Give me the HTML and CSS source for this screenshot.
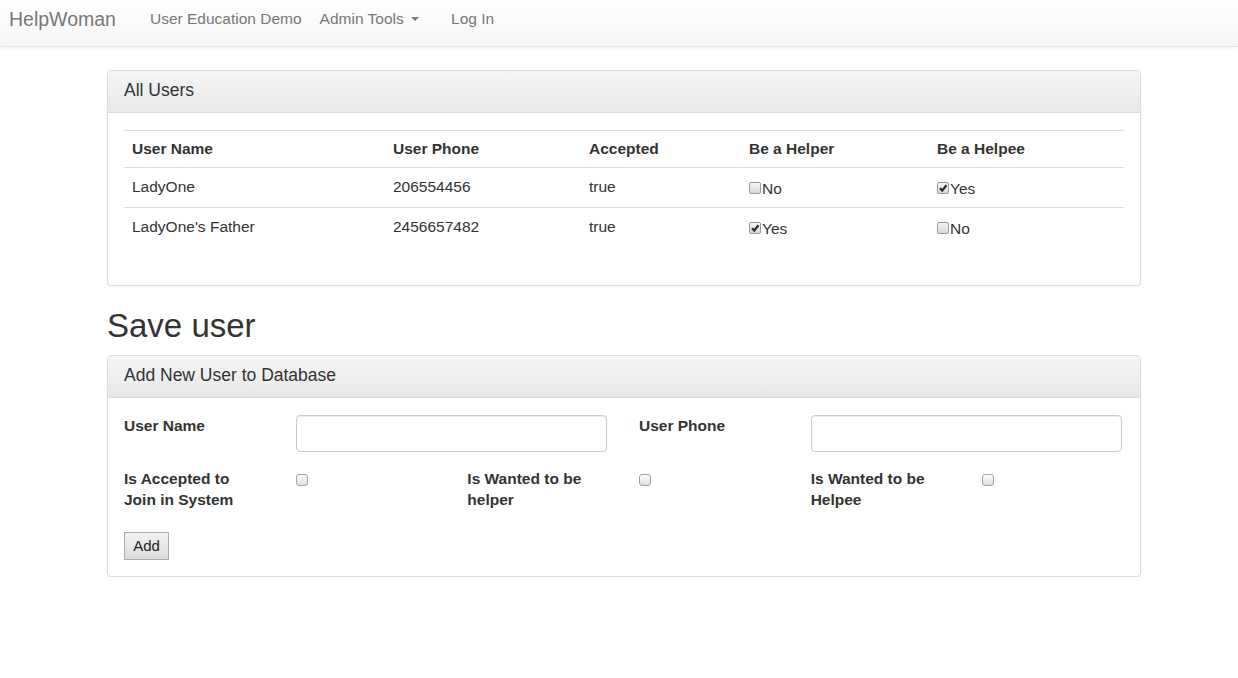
FILE: index.html
```html
<!DOCTYPE html>
<html>
<head>
<meta charset="utf-8">
<title>HelpWoman</title>
<link rel="stylesheet" href="styles.css">
</head>
<body>
<nav class="navbar">
  <a class="brand" href="#">HelpWoman</a>
  <ul class="nav">
    <li><a href="#">User Education Demo</a></li>
    <li><a href="#">Admin Tools <span class="caret"></span></a></li>
  </ul>
  <ul class="nav nav-right">
    <li><a href="#">Log In</a></li>
  </ul>
</nav>

<main class="container">
  <section class="panel">
    <div class="panel-heading">All Users</div>
    <div class="panel-body">
      <table class="table">
        <thead>
          <tr>
            <th class="c1">User Name</th>
            <th class="c2">User Phone</th>
            <th class="c3">Accepted</th>
            <th class="c4">Be a Helper</th>
            <th class="c5">Be a Helpee</th>
          </tr>
        </thead>
        <tbody>
          <tr>
            <td>LadyOne</td>
            <td>206554456</td>
            <td>true</td>
            <td><span class="tcb"><span class="box"></span>No</span></td>
            <td><span class="tcb"><span class="box"><svg viewBox="0 0 10 10" class="tick"><path d="M2 5.2 L4.2 7.6 L8.4 2.2" /></svg></span>Yes</span></td>
          </tr>
          <tr>
            <td>LadyOne's Father</td>
            <td>2456657482</td>
            <td>true</td>
            <td><span class="tcb"><span class="box"><svg viewBox="0 0 10 10" class="tick"><path d="M2 5.2 L4.2 7.6 L8.4 2.2" /></svg></span>Yes</span></td>
            <td><span class="tcb"><span class="box"></span>No</span></td>
          </tr>
        </tbody>
      </table>
    </div>
  </section>

  <h1 class="title">Save user</h1>

  <section class="panel">
    <div class="panel-heading">Add New User to Database</div>
    <div class="panel-body">
      <form class="form-grid">
        <label class="lbl">User Name</label>
        <div class="span2"><input class="input" type="text"></div>
        <label class="lbl">User Phone</label>
        <div class="span2"><input class="input" type="text"></div>

        <label class="lbl lbl2">Is Accepted to Join in System</label>
        <div><span class="fcb"></span></div>
        <label class="lbl lbl2">Is Wanted to be helper</label>
        <div><span class="fcb"></span></div>
        <label class="lbl lbl2">Is Wanted to be Helpee</label>
        <div><span class="fcb"></span></div>

        <div class="btn-row"><button type="button" class="btn">Add</button></div>
      </form>
    </div>
  </section>
</main>
</body>
</html>
```

FILE: styles.css
```css
* { box-sizing: border-box; }
html, body { margin: 0; padding: 0; }
body {
  font-family: "Liberation Sans", Arial, sans-serif;
  font-size: 15.5px;
  line-height: 20px;
  color: #333;
  background: #fff;
}
a { text-decoration: none; }

.navbar {
  display: flex;
  align-items: center;
  height: 47px;
  background: linear-gradient(to bottom, #ffffff 0%, #f6f6f6 100%);
  border-bottom: 1px solid #e4e4e4;
  box-shadow: 0 1px 4px rgba(0,0,0,0.06);
  padding-bottom: 9px;
}
.brand {
  color: #777;
  font-size: 19.5px;
  line-height: 20px;
  padding: 0 0 0 9px;
  margin-right: 34px;
}
.nav {
  list-style: none;
  margin: 0;
  padding: 0;
  display: flex;
  gap: 18px;
}
.nav a {
  color: #777;
  font-size: 15.5px;
  line-height: 20px;
}
.nav-right { margin-left: 32px; }
.caret {
  display: inline-block;
  width: 0; height: 0;
  margin-left: 3px;
  vertical-align: middle;
  border-top: 4px solid #777;
  border-left: 4px solid transparent;
  border-right: 4px solid transparent;
}

.container {
  width: 1034px;
  margin-left: 107px;
  padding-top: 23px;
}

.panel {
  border: 1px solid #dcdcdc;
  border-radius: 4px;
  box-shadow: 0 1px 2px rgba(0,0,0,0.05);
  background: #fff;
}
.panel-heading {
  height: 42px;
  padding: 9px 16px 11px;
  font-size: 17.5px;
  line-height: 20px;
  color: #333;
  background: linear-gradient(to bottom, #f5f5f5 0%, #e8e8e8 100%);
  border-bottom: 1px solid #dcdcdc;
  border-radius: 3px 3px 0 0;
}
.panel-body { padding: 17px 16px 16px; }

.table {
  width: 100%;
  border-collapse: collapse;
  margin-bottom: 21px;
  border-top: 1px solid #ddd;
}
.table th, .table td {
  text-align: left;
  padding: 8px 8px;
  vertical-align: top;
}
.table th { font-weight: bold; border-bottom: 1px solid #ddd; }
.table td { border-top: 1px solid #ddd; height: 40px; padding-top: 9px; }
.table tbody tr:first-child td { border-top: none; }
.c1 { width: 261px; }
.c2 { width: 196px; }
.c3 { width: 160px; }
.c4 { width: 188px; }

.tcb { display: inline-flex; align-items: flex-start; padding-top: 2px; }
.tcb .box {
  width: 12px; height: 12px;
  margin-top: 3px;
  margin-right: 1px;
  border: 1px solid #9a9a9a;
  border-radius: 2px;
  background: linear-gradient(to bottom, #f6f6f6, #d8d8d8);
  position: relative;
}
.tick {
  position: absolute;
  left: 0; top: 0;
  width: 10px; height: 10px;
  fill: none;
  stroke: #2a2a2a;
  stroke-width: 2.2;
}

.title {
  font-size: 33px;
  font-weight: normal;
  line-height: 40px;
  margin: 20px 0 9px;
  color: #333;
}

.form-grid {
  display: grid;
  grid-template-columns: repeat(6, 1fr);
  row-gap: 16px;
  margin: 0 -15px;
}
.form-grid > * { padding: 0 15px; }
.span2 { grid-column: span 2; }
.lbl {
  font-weight: bold;
  line-height: 21px;
  padding-top: 0;
}
.lbl2 { padding-right: 40px; }
.input {
  display: block;
  width: 311px;
  height: 37px;
  margin: 0;
  border: 1px solid #ccc;
  border-radius: 4px;
  box-shadow: inset 0 1px 1px rgba(0,0,0,0.075);
  background: #fff;
}
.fcb {
  display: block;
  width: 12px; height: 12px;
  margin-top: 6px;
  border: 1px solid #a4a4a4;
  border-radius: 3px;
  background: linear-gradient(to bottom, #fdfdfd, #dedede);
}
.btn-row { grid-column: 1 / -1; margin-top: 6px; }
.btn {
  display: block;
  font-family: "Liberation Sans", Arial, sans-serif;
  font-size: 15px;
  color: #222;
  height: 28px;
  width: 45px;
  padding: 0;
  border: 1px solid #adadad;
  border-radius: 0;
  background: linear-gradient(to bottom, #f2f2f2, #dcdcdc);
}
```
